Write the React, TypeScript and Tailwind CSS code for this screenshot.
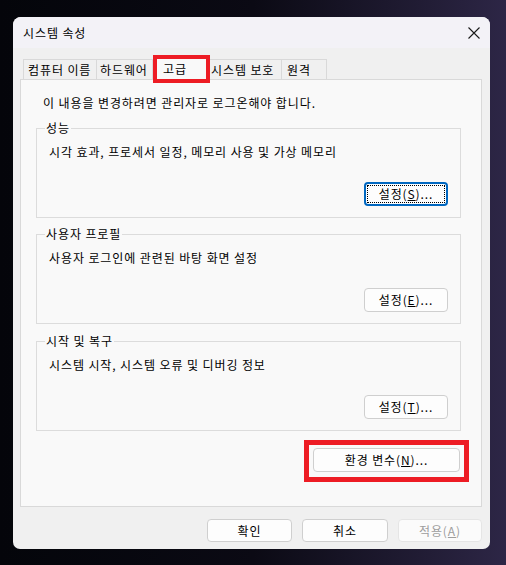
const font = { fontFamily: '"Noto Sans CJK KR", "Noto Sans", sans-serif' };

const Btn = ({ label, k, rest = '...', w = 'w-[84px]', focused = false, disabled = false }: { label: string; k: string; rest?: string; w?: string; focused?: boolean; disabled?: boolean }) => (
  <div
    className={`${w} h-[24px] flex items-center justify-center rounded-[4px] text-[12px] leading-[16px] ${
      focused
        ? 'border-2 border-[#0067c0] bg-[#fdfdfd] p-[1px]'
        : disabled
        ? 'border border-[#e5e5e5] bg-[#fbfbfb] text-[#9d9d9d]'
        : 'border border-[#cfcfcf] bg-[#fdfdfd] text-black'
    }`}
  >
    {focused ? (
      <div className="w-full h-full flex items-center justify-center border border-dotted border-black">
        {label}(<span className="underline">{k}</span>){rest}
      </div>
    ) : (
      <span>
        {label}(<span className="underline">{k}</span>){rest}
      </span>
    )}
  </div>
);

const Group = ({ title, desc, btn, className }: { title: string; desc: string; btn: React.ReactNode; className: string }) => (
  <fieldset className={`${className} border border-[#dcdcdc] pl-[8px] pr-[12px] pb-[11px] h-[98px]`}>
    <legend className="px-[1px] text-[12px] leading-[16px] text-black">{title}</legend>
    <div className="pl-[4px] pt-[8px] text-[12px] leading-[16px] text-black">{desc}</div>
    <div className="flex justify-end mt-[22px]">{btn}</div>
  </fieldset>
);

export default function App() {
  return (
    <div
      className="w-[506px] h-[565px] pt-[17px] pl-[13px] bg-gradient-to-r from-[#04050a] via-[#0b0a14] to-[#2d2646] overflow-hidden tracking-[0.9px]"
      style={font}
    >
      <div className="w-[477px] h-[532px] rounded-t-[8px] rounded-b-[7px] bg-[#f0f0f0] overflow-hidden flex flex-col">
        <div className="h-[31px] bg-[#f3f2f7] flex items-center justify-between pl-[10px] pr-[9px]">
          <span className="text-[12px] leading-[16px] text-black">시스템 속성</span>
          <svg width="12" height="12" viewBox="0 0 12 12" className="mr-[1px]">
            <path d="M0.5 0.5 L11.5 11.5 M11.5 0.5 L0.5 11.5" stroke="#1a1a1a" strokeWidth="1.1" fill="none" />
          </svg>
        </div>

        <div className="mt-[8px] ml-[10px] flex items-end h-[23px] text-[12px] leading-[16px] text-black">
          <div className="h-[20px] w-[74px] border border-b-0 border-[#d9d9d9] bg-[#f0f0f0] pl-[4px] flex items-center">컴퓨터 이름</div>
          <div className="h-[20px] w-[56px] border border-b-0 border-l-0 border-[#d9d9d9] bg-[#f0f0f0] pl-[3px] flex items-center">하드웨어</div>
          <div className="relative z-10 h-[23px] w-[57px] -mb-px border border-b-0 border-[#d9d9d9] bg-[#f9f9f9] pl-[9px] flex items-center">
            고급
            <div className="absolute -left-px -top-[3px] -right-[1px] -bottom-[3px] border-[4px] border-[#ed1c24]" />
          </div>
          <div className="h-[20px] w-[72px] border border-b-0 border-l-0 border-[#d9d9d9] bg-[#f0f0f0] pl-[1px] flex items-center">시스템 보호</div>
          <div className="h-[20px] w-[45px] border border-b-0 border-l-0 border-[#d9d9d9] bg-[#f0f0f0] pl-[5px] flex items-center">원격</div>
        </div>

        <div className="ml-[7px] w-[462px] h-[428px] border border-[#d9d9d9] bg-[#f9f9f9] flex flex-col pl-[15px] pr-[20px]">
          <div className="pt-[15px] pl-[7px] text-[12px] leading-[16px] text-black">이 내용을 변경하려면 관리자로 로그온해야 합니다.</div>
          <Group
            className="mt-[9px]"
            title="성능"
            desc="시각 효과, 프로세서 일정, 메모리 사용 및 가상 메모리"
            btn={<Btn label="설정" k="S" focused />}
          />
          <Group
            className="mt-[8px]"
            title="사용자 프로필"
            desc="사용자 로그인에 관련된 바탕 화면 설정"
            btn={<Btn label="설정" k="E" />}
          />
          <Group
            className="mt-[9px]"
            title="시작 및 복구"
            desc="시스템 시작, 시스템 오류 및 디버깅 정보"
            btn={<Btn label="설정" k="T" />}
          />
          <div className="flex justify-end mt-[17px] pr-[1px]">
            <div className="relative">
              <Btn label="환경 변수" k="N" w="w-[147px]" />
              <div className="absolute -left-[9px] -top-[8px] -right-[9px] -bottom-[10px] border-[5px] border-[#ed1c24]" />
            </div>
          </div>
        </div>

        <div className="mt-[12px] flex justify-end gap-[10px] pr-[8px]">
          <div className="w-[85px] h-[23px] flex items-center justify-center rounded-[4px] border border-[#cfcfcf] bg-[#fdfdfd] text-[12px] text-black">확인</div>
          <div className="w-[86px] h-[23px] flex items-center justify-center rounded-[4px] border border-[#cfcfcf] bg-[#fdfdfd] text-[12px] text-black">취소</div>
          <div className="w-[84px] h-[23px] flex items-center justify-center rounded-[4px] border border-[#e5e5e5] bg-[#fbfbfb] text-[12px] text-[#9d9d9d]">
            <span>적용(<span className="underline">A</span>)</span>
          </div>
        </div>
      </div>
    </div>
  );
}
